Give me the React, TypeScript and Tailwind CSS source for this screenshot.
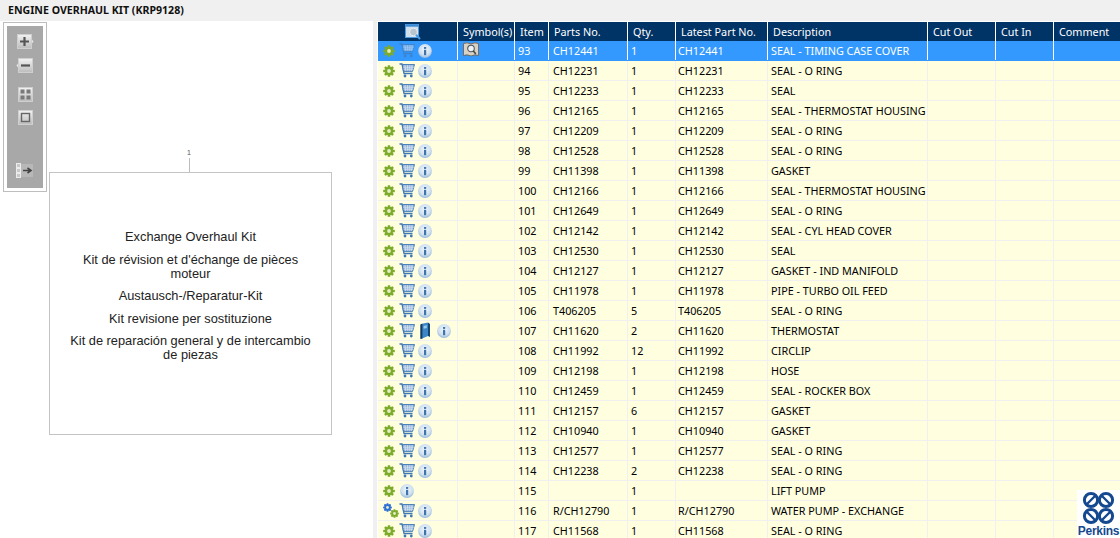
import React from "react";

type Row = {
  item: string;
  part: string;
  qty: string;
  latest: string;
  desc: string;
  kind?: "book" | "nocart" | "blue";
};

const rows: Row[] = [
  { item: "93", part: "CH12441", qty: "1", latest: "CH12441", desc: "SEAL - TIMING CASE COVER" },
  { item: "94", part: "CH12231", qty: "1", latest: "CH12231", desc: "SEAL - O RING" },
  { item: "95", part: "CH12233", qty: "1", latest: "CH12233", desc: "SEAL" },
  { item: "96", part: "CH12165", qty: "1", latest: "CH12165", desc: "SEAL - THERMOSTAT HOUSING" },
  { item: "97", part: "CH12209", qty: "1", latest: "CH12209", desc: "SEAL - O RING" },
  { item: "98", part: "CH12528", qty: "1", latest: "CH12528", desc: "SEAL - O RING" },
  { item: "99", part: "CH11398", qty: "1", latest: "CH11398", desc: "GASKET" },
  { item: "100", part: "CH12166", qty: "1", latest: "CH12166", desc: "SEAL - THERMOSTAT HOUSING" },
  { item: "101", part: "CH12649", qty: "1", latest: "CH12649", desc: "SEAL - O RING" },
  { item: "102", part: "CH12142", qty: "1", latest: "CH12142", desc: "SEAL - CYL HEAD COVER" },
  { item: "103", part: "CH12530", qty: "1", latest: "CH12530", desc: "SEAL" },
  { item: "104", part: "CH12127", qty: "1", latest: "CH12127", desc: "GASKET - IND MANIFOLD" },
  { item: "105", part: "CH11978", qty: "1", latest: "CH11978", desc: "PIPE - TURBO OIL FEED" },
  { item: "106", part: "T406205", qty: "5", latest: "T406205", desc: "SEAL - O RING" },
  { item: "107", part: "CH11620", qty: "2", latest: "CH11620", desc: "THERMOSTAT", kind: "book" },
  { item: "108", part: "CH11992", qty: "12", latest: "CH11992", desc: "CIRCLIP" },
  { item: "109", part: "CH12198", qty: "1", latest: "CH12198", desc: "HOSE" },
  { item: "110", part: "CH12459", qty: "1", latest: "CH12459", desc: "SEAL - ROCKER BOX" },
  { item: "111", part: "CH12157", qty: "6", latest: "CH12157", desc: "GASKET" },
  { item: "112", part: "CH10940", qty: "1", latest: "CH10940", desc: "GASKET" },
  { item: "113", part: "CH12577", qty: "1", latest: "CH12577", desc: "SEAL - O RING" },
  { item: "114", part: "CH12238", qty: "2", latest: "CH12238", desc: "SEAL - O RING" },
  { item: "115", part: "", qty: "1", latest: "", desc: "LIFT PUMP", kind: "nocart" },
  { item: "116", part: "R/CH12790", qty: "1", latest: "R/CH12790", desc: "WATER PUMP - EXCHANGE", kind: "blue" },
  { item: "117", part: "CH11568", qty: "1", latest: "CH11568", desc: "SEAL - O RING" },
];

const Gear = ({ color = "#7dab2c", size = 12 }: { color?: string; size?: number }) => (
  <svg width={size} height={size} viewBox="0 0 12 12" className="shrink-0">
    <g fill={color}>
      <circle cx="6" cy="6" r="4.2" />
      <rect x="4.7" y="0.2" width="2.6" height="11.6" rx="0.6" />
      <rect x="0.2" y="4.7" width="11.6" height="2.6" rx="0.6" />
      <rect x="4.7" y="0.2" width="2.6" height="11.6" rx="0.6" transform="rotate(45 6 6)" />
      <rect x="4.7" y="0.2" width="2.6" height="11.6" rx="0.6" transform="rotate(-45 6 6)" />
    </g>
    <circle cx="6" cy="6" r="1.9" fill="#e4efc4" />
  </svg>
);

const Cart = ({ faded }: { faded?: boolean }) => (
  <svg width="16" height="15" viewBox="0 0 16 15" className="shrink-0 -mt-[1px]" opacity={faded ? 0.65 : 1}>
    <path d="M0.5 1 H3 L5 10.5 H13.5" fill="none" stroke="#3f78b5" strokeWidth="1.3" />
    <path d="M3.3 1.5 H15.5 L13.6 8.4 H4.6 Z" fill="#8fb0d6" stroke="#3f78b5" strokeWidth="0.9" />
    <path d="M6 2 L6.6 8 M8.4 2 L8.8 8 M10.8 2 L10.8 8 M13.2 2 L12.6 8 M4 4.2 H15 M4.5 6.2 H14.3" stroke="#e8f0f8" strokeWidth="0.6" />
    <circle cx="6" cy="13" r="1.4" fill="#3f78b5" />
    <circle cx="12.3" cy="13" r="1.4" fill="#3f78b5" />
  </svg>
);

const Info = () => (
  <svg width="14" height="14" viewBox="0 0 14 14" className="shrink-0">
    <defs>
      <radialGradient id="infoBg" cx="50%" cy="40%" r="62%">
        <stop offset="0%" stopColor="#f2f7fc" />
        <stop offset="65%" stopColor="#cfe0f0" />
        <stop offset="100%" stopColor="#8fb4da" />
      </radialGradient>
    </defs>
    <circle cx="7" cy="7" r="6.9" fill="url(#infoBg)" />
    <rect x="6" y="3" width="2.2" height="1.9" fill="#3f75ab" />
    <rect x="6" y="5.8" width="2.2" height="5.4" fill="#3f75ab" />
  </svg>
);

const Book = () => (
  <svg width="11" height="18" viewBox="0 0 11 18" className="shrink-0">
    <path d="M1 2 L8 0.5 V14 L1 17 Z" fill="#3a86c6" />
    <path d="M8 0.5 L10 2 V15 L8 14 Z" fill="#15466f" />
    <path d="M2.4 1.8 V16.4 L0.3 17 V2.5 Z" fill="#123b60" />
    <path d="M3.6 4 L6.8 3.2 V6 L3.6 6.8 Z" fill="#9cc9ea" />
  </svg>
);

const BookSearch = () => (
  <svg width="16" height="15" viewBox="0 0 16 15">
    <path d="M0.5 1.5 Q4 0 8 2 Q12 0 15.5 1.5 V13.5 Q12 12 8 14 Q4 12 0.5 13.5 Z" fill="#d9d2c4" stroke="#6f6354" strokeWidth="0.9" />
    <circle cx="8" cy="6.5" r="3.3" fill="#eef3f7" stroke="#4c555e" strokeWidth="1.1" />
    <path d="M10.4 9 L12.8 12" stroke="#444" strokeWidth="1.5" />
  </svg>
);

const HeaderSearch = () => (
  <svg width="16" height="16" viewBox="0 0 16 16">
    <rect x="0.5" y="0.5" width="13" height="13" fill="#cfe0ee" stroke="#4d9be0" strokeWidth="1" />
    <rect x="0.5" y="0.5" width="13" height="2.2" fill="#3a8ad6" />
    <circle cx="8.5" cy="8" r="3.9" fill="#b8c4ce" stroke="#e6edf3" strokeWidth="1" />
    <path d="M11 10.8 L15 15" stroke="#4d9be0" strokeWidth="2" />
  </svg>
);

const Perkins = () => (
  <div className="absolute right-0 bottom-0 w-[43px] h-[48px] bg-white flex flex-col items-center pt-[1px]">
    <svg width="33" height="34" viewBox="0 0 33 34" fill="none" stroke="#14498f" strokeWidth="3">
      <circle cx="9" cy="9" r="6.6" />
      <circle cx="24" cy="9" r="6.6" />
      <circle cx="9" cy="25" r="6.6" />
      <circle cx="24" cy="25" r="6.6" />
      <path d="M5 13 L13 5 M20 5 L28 13 M5 21 L13 29 M28 21 L20 29" strokeWidth="2.4" />
    </svg>
    <span className="text-[12px] leading-[13px] font-bold text-[#14498f] font-['Liberation_Sans',sans-serif] tracking-[-0.3px]">
      Perkins
    </span>
  </div>
);

const ButtonFace = ({ x = 0, w = 15 }: { x?: number; w?: number }) => (
  <>
    <defs>
      <linearGradient id="toolFace" x1="0" y1="0" x2="0" y2="1">
        <stop offset="0%" stopColor="#f2f2f2" />
        <stop offset="100%" stopColor="#bcbcbc" />
      </linearGradient>
    </defs>
    <rect x={x + 0.5} y="0.5" width={w - 1} height="14" fill="url(#toolFace)" stroke="#cfcfcf" />
  </>
);

const Toolbar = () => (
  <div className="absolute left-[3px] top-[1px] w-[44px] h-[170px] bg-white border border-[#bdbdbd] p-[3px]">
    <div className="h-[162px] bg-[#a8a8a8] flex flex-col items-center pt-[8px]">
      <svg width="17" height="15" viewBox="0 0 17 15" className="ml-[1px]">
        <ButtonFace />
        <path d="M15 5.5 L16.5 7.5 L15 9.5 Z" fill="#e6e6e6" />
        <path d="M3 7.5 H12 M7.5 3 V12" stroke="#555" strokeWidth="2.2" />
      </svg>
      <svg width="17" height="15" viewBox="0 0 17 15" className="mt-[9px] -ml-[1px]">
        <ButtonFace x={2} />
        <path d="M2 5.5 L0.5 7.5 L2 9.5 Z" fill="#e6e6e6" />
        <path d="M5 7.5 H14" stroke="#555" strokeWidth="2.2" />
      </svg>
      <svg width="15" height="15" viewBox="0 0 15 15" className="mt-[14px]">
        <ButtonFace />
        <g fill="#7a7a7a">
          <rect x="2.5" y="2.5" width="4" height="4" />
          <rect x="8.5" y="2.5" width="4" height="4" />
          <rect x="2.5" y="8.5" width="4" height="4" />
          <rect x="8.5" y="8.5" width="4" height="4" />
        </g>
      </svg>
      <svg width="15" height="15" viewBox="0 0 15 15" className="mt-[8px]">
        <ButtonFace />
        <rect x="3.5" y="3.5" width="8" height="8" fill="none" stroke="#666" strokeWidth="1.4" />
      </svg>
      <svg width="18" height="15" viewBox="0 0 18 15" className="mt-[38px]">
        <g fill="#c8c8c8" stroke="#ececec">
          <rect x="0.5" y="0.5" width="4" height="4" />
          <rect x="0.5" y="5.5" width="4" height="4" />
          <rect x="0.5" y="10.5" width="4" height="4" />
        </g>
        <rect x="5" y="1" width="12" height="13" fill="#b8b8b8" />
        <path d="M7 7.5 H14 M11.5 5 L15 7.5 L11.5 10" stroke="#444" strokeWidth="1.6" fill="none" />
      </svg>
    </div>
  </div>
);

const Drawing = () => (
  <div className="relative w-[373px] bg-white">
    <Toolbar />
    <div className="absolute left-[189px] top-[128px] text-[7px] leading-[7px] text-[#555] font-['Liberation_Sans',sans-serif] -translate-x-1/2">1</div>
    <div className="absolute left-[189px] top-[137px] w-px h-[14px] bg-[#bcbcbc]" />
    <div className="absolute left-[49px] top-[151px] w-[283px] h-[263px] border border-[#c4c4c4] font-['Liberation_Sans',sans-serif] text-[12.8px] leading-[14px] text-[#222] text-center flex flex-col items-center pt-[57px] gap-[8.5px]">
      <div>Exchange Overhaul Kit</div>
      <div className="w-[250px]">Kit de révision et d'échange de pièces moteur</div>
      <div>Austausch-/Reparatur-Kit</div>
      <div>Kit revisione per sostituzione</div>
      <div className="w-[250px]">Kit de reparación general y de intercambio de piezas</div>
    </div>
  </div>
);

const gridCols = "grid grid-cols-[79px_57px_34px_79px_48px_92px_160px_68px_58px_67px]";

const Cell = ({ children, selected, className = "pl-[3px]" }: { children?: React.ReactNode; selected?: boolean; className?: string }) => (
  <div className={`h-[19px] whitespace-nowrap leading-[19px] border-l ${selected ? "border-white" : "border-[#f0f0f0]"} ${className}`}>
    {children}
  </div>
);

const TableRow = ({ row, selected }: { row: Row; selected: boolean }) => (
  <div
    className={`${gridCols} border-b ${
      selected ? "bg-[#3399ff] text-white border-[#3399ff]" : "bg-[#ffffe0] text-black border-[#f0f0f0]"
    }`}
  >
    <div className="h-[19px] flex items-center pl-[5px]">
      {row.kind === "blue" ? (
        <div className="relative w-[16px] h-[15px] -mr-[4px] shrink-0">
          <div className="absolute left-0 top-0"><Gear color="#2f6fd6" size={9} /></div>
          <div className="absolute right-0 bottom-0"><Gear size={9} /></div>
        </div>
      ) : (
        <Gear />
      )}
      {row.kind !== "nocart" && <div className="ml-[4px] flex"><Cart faded={selected} /></div>}
      {row.kind === "book" && <div className="ml-[5px] flex"><Book /></div>}
      <div className={`flex ${row.kind === "book" ? "ml-[6px]" : row.kind === "nocart" ? "ml-[5px]" : "ml-[3px]"}`}>
        <Info />
      </div>
    </div>
    <Cell selected={selected} className="pl-[5px]">
      {selected && <div className="pt-[1px]"><BookSearch /></div>}
    </Cell>
    <Cell selected={selected}>{row.item}</Cell>
    <Cell selected={selected} className="pl-[4px]">{row.part}</Cell>
    <Cell selected={selected}>{row.qty}</Cell>
    <Cell selected={selected} className="pl-[2px]">{row.latest}</Cell>
    <Cell selected={selected}>{row.desc}</Cell>
    <Cell selected={selected} />
    <Cell selected={selected} />
    <Cell selected={selected} />
  </div>
);

const headers = ["Symbol(s)", "Item", "Parts No.", "Qty.", "Latest Part No.", "Description", "Cut Out", "Cut In", "Comment"];

const PartsTable = () => (
  <div className="relative ml-[4px] w-[743px] h-[517px] overflow-hidden bg-white pt-px pl-px font-['Noto_Sans',sans-serif] text-[10.8px]">
    <div className={`${gridCols} h-[19px] bg-[#003366] text-white`}>
      <div className="flex items-center pl-[27px]">
        <HeaderSearch />
      </div>
      {headers.map((h) => (
        <div key={h} className="pl-[5px] leading-[19px] whitespace-nowrap border-l border-white">
          {h}
        </div>
      ))}
    </div>
    {rows.map((row, i) => (
      <TableRow key={row.item} row={row} selected={i === 0} />
    ))}
    <Perkins />
  </div>
);

const App = () => (
  <div className="w-[1120px] h-[538px] overflow-hidden bg-[#f0f0f0] flex flex-col">
    <div className="h-[21px] pl-[8px] font-['Noto_Sans',sans-serif] font-bold text-[10.6px] leading-[21px] text-[#111]">
      ENGINE OVERHAUL KIT (KRP9128)
    </div>
    <div className="flex flex-1">
      <Drawing />
      <PartsTable />
    </div>
  </div>
);

export default App;
